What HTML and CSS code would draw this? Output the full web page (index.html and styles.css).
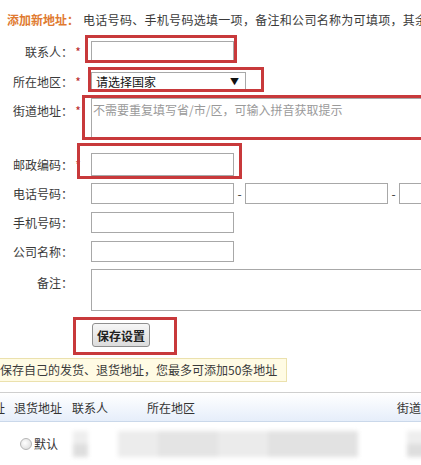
FILE: index.html
```html
<!DOCTYPE html>
<html lang="zh-CN">
<head>
    <meta charset="UTF-8">
    <meta name="viewport" content="width=device-width, initial-scale=1.0">
    <title>收货地址管理</title>
    <link rel="stylesheet" href="styles.css">
</head>
<body>

<div class="page">
    <!-- 新增地址表单 -->
    <div class="address-form">
        <div class="row row-head">
            <div class="label label-head">添加新地址：</div>
            <div class="tip">电话号码、手机号码选填一项，备注和公司名称为可填项，其余均为必填项</div>
        </div>

        <div class="row row-name">
            <label class="label">联系人：</label><span class="star">*</span>
            <div class="field">
                <input class="text" type="text">
                <span class="mark mark-name"></span>
            </div>
        </div>

        <div class="row row-region">
            <label class="label">所在地区：</label><span class="star">*</span>
            <div class="field">
                <div class="select"><span>请选择国家</span><span class="arrow">▼</span></div>
                <span class="mark mark-region"></span>
            </div>
        </div>

        <div class="row row-address row-top">
            <label class="label">街道地址：</label><span class="star">*</span>
            <div class="field">
                <textarea class="area area-address" placeholder="不需要重复填写省/市/区，可输入拼音获取提示"></textarea>
                <span class="mark mark-address"></span>
            </div>
        </div>

        <div class="row row-postal">
            <label class="label">邮政编码：</label><span class="star">*</span>
            <div class="field">
                <input class="text text-postal" type="text">
                <span class="mark mark-postal"></span>
            </div>
        </div>

        <div class="row row-phone">
            <label class="label">电话号码：</label><span class="star"></span>
            <div class="field field-phone">
                <input class="text" type="text">
                <span class="dash">-</span>
                <input class="text" type="text">
                <span class="dash">-</span>
                <input class="text text-ext" type="text">
            </div>
        </div>

        <div class="row row-mobile">
            <label class="label">手机号码：</label><span class="star"></span>
            <div class="field"><input class="text" type="text"></div>
        </div>

        <div class="row row-company">
            <label class="label">公司名称：</label><span class="star"></span>
            <div class="field"><input class="text" type="text"></div>
        </div>

        <div class="row row-remark row-top">
            <label class="label">备注：</label><span class="star"></span>
            <div class="field"><textarea class="area area-remark"></textarea></div>
        </div>

        <div class="row row-submit">
            <div class="field">
                <button class="save-btn" type="button">保存设置</button>
                <span class="mark mark-submit"></span>
            </div>
        </div>
    </div>

    <!-- 提示 -->
    <div class="notice">保存自己的发货、退货地址，您最多可添加50条地址</div>

    <!-- 地址列表 -->
    <div class="address-table">
        <div class="thead">
            <div class="cell c-send">发货地址</div>
            <div class="cell c-return">退货地址</div>
            <div class="cell c-contact">联系人</div>
            <div class="cell c-region">所在地区</div>
            <div class="cell c-street">街道地址</div>
        </div>
        <div class="trow">
            <div class="cell c-send"></div>
            <div class="cell c-return"><span class="radio"></span>默认</div>
            <div class="cell c-contact"><span class="blur blur-a"></span></div>
            <div class="cell c-region"><span class="blur blur-b"></span></div>
            <div class="cell c-street"><span class="blur blur-c"></span></div>
        </div>
    </div>
</div>

</body>
</html>
```

FILE: styles.css
```css
body {
    margin: 0;
    overflow: hidden;
    background-color: #fff;
    font-family: "Noto Sans CJK SC", "Liberation Sans", sans-serif;
    font-size: 12px;
    color: #3a3a3a;
}
.page {
    width: 421px;
    height: 465px;
    overflow: hidden;
}

/* 表单 */
.address-form {
    padding-top: 12px;
}
.row {
    display: flex;
    align-items: center;
    white-space: nowrap;
}
.row-top {
    align-items: flex-start;
}
.label {
    width: 73px;
    flex-shrink: 0;
    text-align: right;
    line-height: 16px;
    color: #3a3a3a;
}
.row-address .label {
    padding-top: 5px;
}
.row-remark .label {
    padding-top: 6px;
}
.label-head {
    width: 83px;
    text-align: left;
    padding-left: 7px;
    box-sizing: border-box;
    color: #e07a30;
    font-weight: bold;
}
.tip {
    line-height: 16px;
    color: #3a3a3a;
    letter-spacing: 0.3px;
}
.star {
    width: 10px;
    flex-shrink: 0;
    text-align: center;
    color: #b82a2a;
    line-height: 16px;
}
.row-address .star {
    padding-top: 5px;
}
.field {
    position: relative;
    margin-left: 8px;
    display: flex;
    align-items: center;
}

.row-name { margin-top: 13px; }
.row-region { margin-top: 10px; }
.row-address { margin-top: 7px; }
.row-postal { margin-top: 14px; }
.row-phone { margin-top: 7px; }
.row-mobile { margin-top: 8px; }
.row-company { margin-top: 8px; }
.row-remark { margin-top: 7px; }
.row-submit { margin-top: 12px; padding-left: 84px; }

.text {
    width: 143px;
    height: 21px;
    box-sizing: border-box;
    border: 1px solid #a8a8a8;
    margin: 0;
    padding: 0 3px;
    background: #fff;
}
.text-postal {
    height: 23px;
}
.dash {
    width: 11px;
    text-align: center;
    color: #333;
    line-height: 16px;
}
.text-ext {
    width: 60px;
}
.select {
    width: 155px;
    height: 19px;
    box-sizing: border-box;
    border: 1px solid #a8a8a8;
    display: flex;
    align-items: center;
    justify-content: space-between;
    padding: 0 6px 0 4px;
    color: #111;
    line-height: 16px;
}
.select .arrow {
    font-size: 9px;
    color: #111;
}
.area {
    width: 400px;
    box-sizing: border-box;
    border: 1px solid #a8a8a8;
    margin: 0;
    padding: 3px 1px;
    resize: none;
    font-family: "Noto Sans CJK SC", "Liberation Sans", sans-serif;
    font-size: 12px;
    line-height: 16px;
}
.area::placeholder {
    color: #9a9a9a;
}
.area-address { height: 41px; }
.area-remark { height: 42px; }

.save-btn {
    width: 58px;
    height: 24px;
    margin: 0;
    padding: 0;
    border: 1px solid #8e8e8e;
    border-radius: 3px;
    background: linear-gradient(#f6f6f6, #dcdcdc);
    font-family: "Noto Sans CJK SC", sans-serif;
    font-size: 12px;
    font-weight: bold;
    color: #222;
}

/* 截图上的红色标注框 */
.mark {
    position: absolute;
    box-sizing: border-box;
    border: 3px solid #c8393b;
    pointer-events: none;
}
.mark-name { left: -6px; top: -6px; width: 152px; height: 28px; }
.mark-region { left: -3px; top: -5px; width: 176px; height: 25px; }
.mark-address { left: -9px; top: -3px; width: 420px; height: 45px; }
.mark-postal { left: -14px; top: -10px; width: 165px; height: 36px; }
.mark-submit { left: -19px; top: -6px; width: 104px; height: 38px; }

/* 提示条 */
.notice {
    margin-top: 11px;
    width: 287px;
    height: 24px;
    box-sizing: border-box;
    border: 1px solid #ebe1ad;
    border-left: 0;
    background-color: #fffbe4;
    line-height: 22px;
    color: #3a3a3a;
    white-space: nowrap;
}

/* 地址列表 */
.address-table {
    margin-top: 10px;
    margin-left: -43px;
    width: 600px;
}
.thead {
    display: flex;
    height: 30px;
    box-sizing: border-box;
    border-top: 1px solid #cfcfcf;
    border-bottom: 1px solid #cad8ea;
    background: linear-gradient(#fff, #e6eefa);
    align-items: center;
    color: #333;
}
.cell {
    flex-shrink: 0;
    white-space: nowrap;
}
.c-send { width: 57px; }
.c-return { width: 58px; }
.c-contact { width: 75px; }
.c-region { width: 250px; }
.c-street { width: 160px; }
.trow {
    display: flex;
    height: 43px;
    align-items: center;
    color: #333;
}
.trow .c-return {
    display: flex;
    align-items: center;
    padding-left: 6px;
    box-sizing: border-box;
}
.radio {
    width: 10px;
    height: 10px;
    border-radius: 50%;
    border: 1px solid #b5b5b5;
    background: radial-gradient(circle at 40% 40%, #fff, #d6d6d6);
    margin-right: 2px;
}
.blur {
    display: block;
    height: 26px;
    filter: blur(2px);
    background: linear-gradient(#eeeeee 50%, #dedede 50%);
}
.blur-a { width: 15px; margin-left: 1px; }
.blur-b { width: 240px; margin-left: -29px; background: linear-gradient(90deg, #ececec 0 40px, #e4e4e4 40px 100px, #ebebeb 100px 150px, #e2e2e2 150px); }
.blur-c { width: 30px; margin-left: 10px; }
```
